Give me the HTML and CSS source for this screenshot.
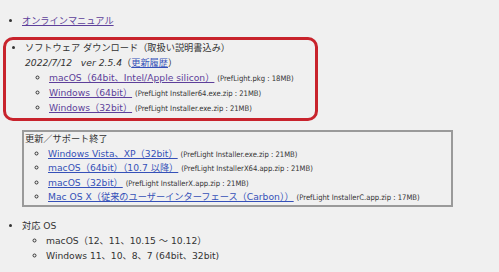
FILE: index.html
```html
<!DOCTYPE html>
<html lang="ja">
<head>
  <meta charset="UTF-8" />
  <title>PrefLight ダウンロード</title>
  <link rel="stylesheet" href="styles.css">
</head>
<body>

<ul class="list">
  <li><a href="#" class="visited">オンラインマニュアル</a></li>
</ul>

<!-- 最新版 -->
<div class="box-current">
  <ul class="list">
    <li>ソフトウェア ダウンロード（取扱い説明書込み）<br>
      <span class="version">2022/7/12&nbsp;&nbsp;&nbsp;ver 2.5.4</span>（<a href="#">更新履歴</a>）
      <ul class="sub">
        <li><a href="#" class="visited">macOS（64bit、Intel/Apple silicon）</a> <span class="file">(PrefLight.pkg : 18MB)</span></li>
        <li><a href="#" class="visited">Windows（64bit）</a> <span class="file">(PrefLight Installer64.exe.zip : 21MB)</span></li>
        <li><a href="#" class="visited">Windows（32bit）</a> <span class="file">(PrefLight Installer.exe.zip : 21MB)</span></li>
      </ul>
    </li>
  </ul>
</div>

<!-- サポート終了 -->
<div class="box-old">
  <div class="box-title">更新／サポート終了</div>
  <ul class="sub">
    <li><a href="#">Windows Vista、XP（32bit）</a> <span class="file">(PrefLight Installer.exe.zip : 21MB)</span></li>
    <li><a href="#">macOS（64bit）（10.7 以降）</a> <span class="file">(PrefLight InstallerX64.app.zip : 21MB)</span></li>
    <li><a href="#">macOS（32bit）</a> <span class="file">(PrefLight InstallerX.app.zip : 21MB)</span></li>
    <li><a href="#">Mac OS X（従来のユーザーインターフェース（Carbon））</a> <span class="file">(PrefLight InstallerC.app.zip : 17MB)</span></li>
  </ul>
</div>

<ul class="list os">
  <li>対応 OS
    <ul class="sub">
      <li>macOS（12、11、10.15 ～ 10.12）</li>
      <li>Windows 11、10、8、7 (64bit、32bit)</li>
    </ul>
  </li>
</ul>

</body>
</html>
```

FILE: styles.css
```css
body {
  font-family: 'DejaVu Sans', 'Noto Sans CJK JP', sans-serif;
  font-size: 9.2px;
  line-height: 15px;
  color: #333;
  background: #f0f0f0;
  margin: 0;
  padding: 13px 0 0 0;
}
a {
  color: #3550b8;
}
a.visited {
  color: #5d3f9a;
}
ul {
  margin: 0;
  padding: 0;
}
li {
  height: 15px;
}
li:has(ul) {
  height: auto;
}
.list {
  list-style: disc;
  padding-left: 22px;
}
.sub {
  list-style: circle;
  padding-left: 24px;
}
.version {
  font-style: italic;
}
.file {
  font-family: 'DejaVu Sans Condensed', 'DejaVu Sans', sans-serif;
  font-size: 7.6px;
  line-height: 8px;
}
.box-current {
  width: 309px;
  margin: 9px 0 0 3px;
  padding: 0 0 3px 0;
  border: 3px solid #c8232c;
  border-radius: 10px;
}
.box-current .list {
  padding-left: 19px;
}
.box-old {
  width: 426px;
  margin: 9px 0 0 22px;
  padding: 0 0 0 1px;
  border: 2px solid #9a9a9a;
}
.box-title,
.box-old li {
  height: 14.5px;
  line-height: 14.5px;
}
.box-old .sub {
  padding-left: 23px;
}
.os {
  margin-top: 11px;
}
```
